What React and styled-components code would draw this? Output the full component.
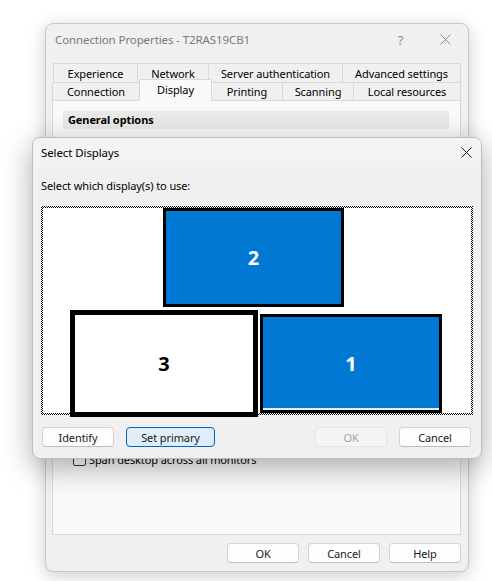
import { createGlobalStyle, styled } from "styled-components";

const GlobalStyle = createGlobalStyle`
  html, body {
    margin: 0;
    background: #ffffff;
  }
  body {
    font-family: "Noto Sans", "Open Sans", sans-serif;
    font-size: 11px;
    letter-spacing: -0.1px;
    color: #1a1a1a;
  }
`;

const topTabs = [
   { label: "Experience", width: 85 },
   { label: "Network", width: 72 },
   { label: "Server authentication", width: 135 },
   { label: "Advanced settings", width: 119 },
];

const bottomTabs = [
   { label: "Connection", width: 88 },
   { label: "Display", width: 73, active: true },
   { label: "Printing", width: 72 },
   { label: "Scanning", width: 72 },
   { label: "Local resources", width: 108 },
];

const monitors = [
   { id: 2, left: 122, top: 2, width: 181, height: 99, blue: true },
   { id: 3, left: 29, top: 104, width: 188, height: 107, selected: true },
   { id: 1, left: 219, top: 108, width: 182, height: 99, primary: true, blue: true },
];

const CloseGlyph = ({ size = 11, color = "#1a1a1a" }) => (
   <svg width={size} height={size} viewBox="0 0 11 11">
      <path d="M0.5 0.5 L10.5 10.5 M10.5 0.5 L0.5 10.5" stroke={color} strokeWidth="1" />
   </svg>
);

const App = () => {
   return (
      <>
         <GlobalStyle />
         <Stage>
            <Window>
               <TitleBar>
                  <span>Connection Properties - T2RAS19CB1</span>
                  <Caption>?</Caption>
                  <Caption>
                     <CloseGlyph size={11} color="#8a8a8a" />
                  </Caption>
               </TitleBar>
               <WindowBody>
                  <TabRow $offset={1}>
                     {topTabs.map((tab) => (
                        <Tab key={tab.label} $width={tab.width} $height={19}>
                           {tab.label}
                        </Tab>
                     ))}
                  </TabRow>
                  <TabRow $offset={0} $height={18}>
                     {bottomTabs.map((tab) => (
                        <Tab
                           key={tab.label}
                           $width={tab.width}
                           $height={tab.active ? 22 : 18}
                           $active={tab.active}
                        >
                           {tab.label}
                        </Tab>
                     ))}
                  </TabRow>
                  <Panel>
                     <SectionBar>General options</SectionBar>
                     <CheckRow>
                        <CheckBox />
                        <span>Span desktop across all monitors</span>
                     </CheckRow>
                  </Panel>
                  <Footer>
                     <Button>OK</Button>
                     <Button>Cancel</Button>
                     <Button>Help</Button>
                  </Footer>
               </WindowBody>
            </Window>

            <Dialog>
               <DialogTitle>
                  <span>Select Displays</span>
                  <DialogClose>
                     <CloseGlyph size={11} />
                  </DialogClose>
               </DialogTitle>
               <DialogBody>
                  <Prompt>Select which display(s) to use:</Prompt>
                  <DisplayArea>
                     <DisplayCanvas />
                     {monitors.map((m) => (
                        <Monitor
                           key={m.id}
                           $blue={m.blue}
                           $selected={m.selected}
                           $primary={m.primary}
                           style={{ left: m.left, top: m.top, width: m.width, height: m.height }}
                        >
                           {m.id}
                        </Monitor>
                     ))}
                  </DisplayArea>
                  <ButtonRow>
                     <Button>Identify</Button>
                     <Button $width={89} $accent>
                        Set primary
                     </Button>
                     <Spacer />
                     <Button disabled>OK</Button>
                     <Button>Cancel</Button>
                  </ButtonRow>
               </DialogBody>
            </Dialog>
         </Stage>
      </>
   );
};

export default App;

//style

const Stage = styled.div`
   position: relative;
   width: 492px;
   height: 581px;
   box-sizing: border-box;
   padding: 23px 0 0 45px;
   overflow: hidden;
`;

const Window = styled.div`
   width: 424px;
   height: 549px;
   box-sizing: border-box;
   border: 1px solid #c6c6c6;
   border-radius: 8px;
   background: #f0f0f0;
   box-shadow: 0 4px 18px rgba(0, 0, 0, 0.2);
   display: flex;
   flex-direction: column;
`;

const TitleBar = styled.div`
   height: 31px;
   display: flex;
   align-items: center;
   padding-left: 9px;
   font-size: 11.5px;
   color: #7a7a7a;

   span {
      flex: 1;
   }
`;

const Caption = styled.div`
   width: 45px;
   height: 31px;
   display: flex;
   align-items: center;
   justify-content: center;
   color: #8a8a8a;
   font-size: 13px;
`;

const WindowBody = styled.div`
   flex: 1;
   display: flex;
   flex-direction: column;
   padding: 8px 7px 8px 6px;
`;

const TabRow = styled.div`
   display: flex;
   align-items: flex-end;
   height: ${({ $height }) => $height || 19}px;
   margin-left: ${({ $offset }) => $offset}px;
`;

const Tab = styled.div`
   position: relative;
   width: ${({ $width }) => $width}px;
   height: ${({ $height }) => $height}px;
   flex-shrink: 0;
   box-sizing: border-box;
   border: 1px solid #d9d9d9;
   border-bottom: none;
   margin-left: -1px;
   display: flex;
   align-items: center;
   justify-content: center;
   background: ${({ $active }) => ($active ? "#f9f9f9" : "#f0f0f0")};
   color: #000;
   z-index: ${({ $active }) => ($active ? 2 : 0)};
   margin-bottom: ${({ $active }) => ($active ? "-1px" : "0")};
   padding-bottom: ${({ $active }) => ($active ? "3px" : "0")};

   &:first-child {
      margin-left: 0;
   }
`;

const Panel = styled.div`
   position: relative;
   height: 435px;
   box-sizing: border-box;
   border: 1px solid #d9d9d9;
   background: #f9f9f9;
   display: flex;
   flex-direction: column;
`;

const SectionBar = styled.div`
   height: 18px;
   margin: 10px 11px 0 10px;
   padding-left: 5px;
   background: #e9e9e9;
   font-weight: 700;
   line-height: 18px;
   color: #000;
`;

const CheckRow = styled.div`
   display: flex;
   align-items: center;
   gap: 3px;
   margin: 323px 0 0 20px;
   color: #000;
`;

const CheckBox = styled.div`
   width: 13px;
   height: 13px;
   box-sizing: border-box;
   border: 1px solid #333;
   border-radius: 2px;
   background: #fff;
`;

const Footer = styled.div`
   display: flex;
   justify-content: flex-end;
   gap: 9px;
   margin-top: 8px;
`;

const Button = styled.button`
   width: ${({ $width }) => $width || 72}px;
   height: 20px;
   box-sizing: border-box;
   padding: 0;
   border: 1px solid ${({ $accent }) => ($accent ? "#0067c0" : "#d3d3d3")};
   border-bottom-color: ${({ $accent }) => ($accent ? "#0067c0" : "#bdbdbd")};
   border-radius: 4px;
   background: ${({ $accent }) => ($accent ? "#dfecf9" : "#fdfdfd")};
   font: inherit;
   letter-spacing: inherit;
   color: #1a1a1a;

   &:disabled {
      background: #f5f5f5;
      border-color: #e6e6e6;
      color: #a0a0a0;
   }
`;

const Dialog = styled.div`
   position: absolute;
   left: 32px;
   top: 137px;
   width: 450px;
   height: 322px;
   box-sizing: border-box;
   border: 1px solid #bdbdbd;
   border-radius: 8px;
   background: #f0f0f0;
   box-shadow: 0 8px 30px rgba(0, 0, 0, 0.32);
   display: flex;
   flex-direction: column;
   overflow: hidden;
`;

const DialogTitle = styled.div`
   height: 29px;
   display: flex;
   align-items: center;
   padding-left: 8px;
   background: #f3f3f3;
   font-size: 11.5px;
   color: #000;

   span {
      flex: 1;
   }
`;

const DialogClose = styled.div`
   width: 30px;
   height: 29px;
   display: flex;
   align-items: center;
   justify-content: center;
`;

const DialogBody = styled.div`
   display: flex;
   flex-direction: column;
   padding: 11px 8px 0 8px;
`;

const Prompt = styled.div`
   height: 16px;
   line-height: 16px;
   color: #000;
`;

const DisplayArea = styled.div`
   position: relative;
   width: 432px;
   height: 209px;
   margin-top: 12px;
   box-sizing: border-box;
   padding: 2px;
   background: repeating-conic-gradient(#000 0 25%, #fff 0 50%) 0 0 / 2px 2px;
`;

const DisplayCanvas = styled.div`
   width: 100%;
   height: 100%;
   background: #fff;
`;

const Monitor = styled.div`
   position: absolute;
   box-sizing: border-box;
   border: ${({ $selected }) => ($selected ? 5 : 3)}px solid #000;
   background: ${({ $blue }) => ($blue ? "#0078d4" : "#fff")};
   box-shadow: ${({ $primary }) => ($primary ? "inset 0 -2px 0 #e9eef3" : "none")};
   display: flex;
   align-items: center;
   justify-content: center;
   font-size: 20px;
   font-weight: 700;
   letter-spacing: 0;
   color: ${({ $blue }) => ($blue ? "#fff" : "#000")};
`;

const ButtonRow = styled.div`
   display: flex;
   gap: 12px;
   margin-top: 12px;
   padding: 0 2px 0 1px;
`;

const Spacer = styled.div`
   flex: 1;
`;
